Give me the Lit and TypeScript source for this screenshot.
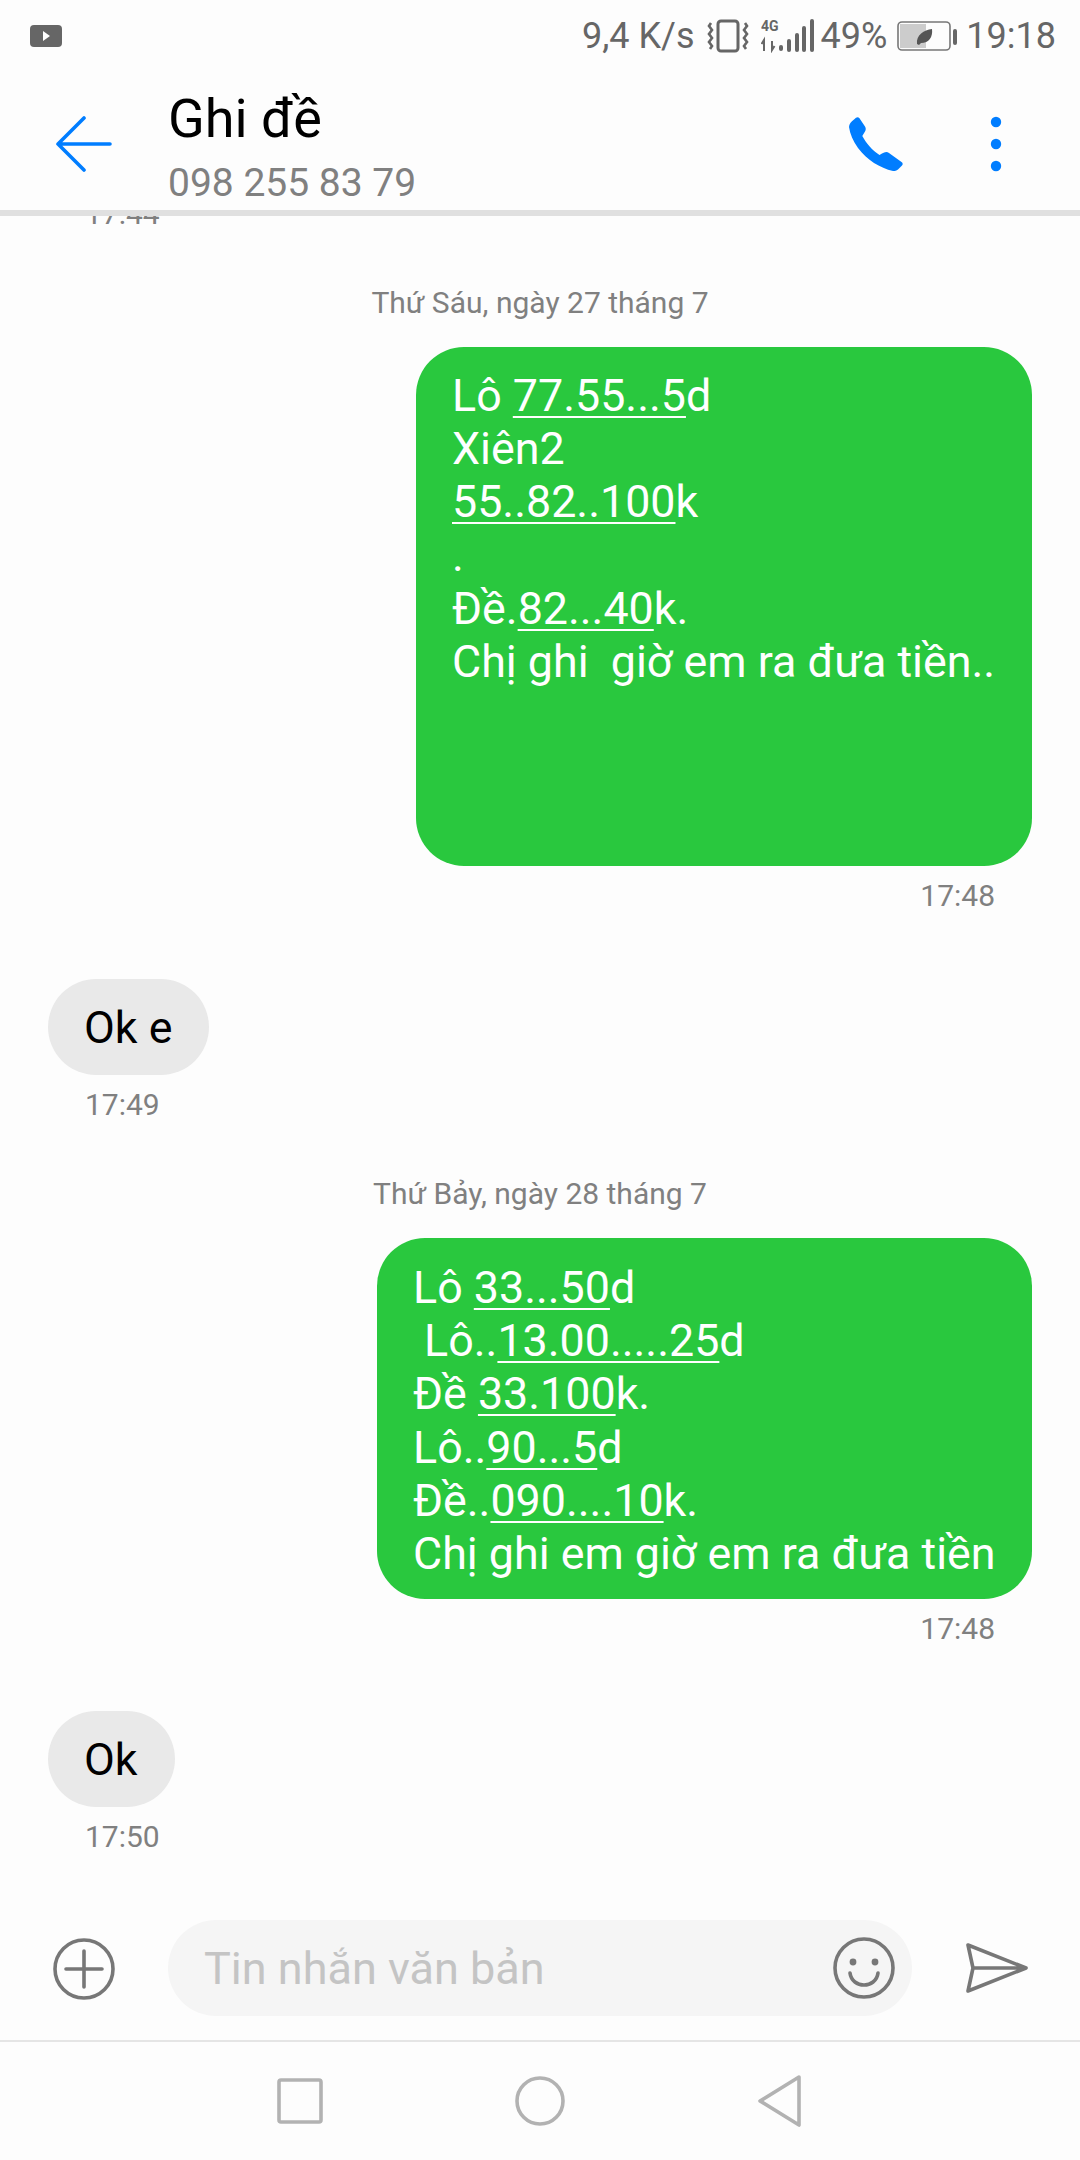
import { LitElement, html, css } from "lit";
import { customElement } from "lit/decorators.js";

@customElement("app-root")
export class AppRoot extends LitElement {
  static styles = css`
    :host { display: flex; flex-direction: column; width: 1080px; height: 2160px; background: #fdfdfd; font-family: Roboto, "Noto Sans", sans-serif; overflow: hidden; }
    .status { height: 72px; flex: none; display: flex; align-items: center; padding: 0 24px 0 30px; color: #666; font-size: 36px; box-sizing: border-box; }
    .status .yt { margin-right: auto; display: block; }
    .status .speed { margin-right: 12px; }
    .status svg { display: block; flex: none; }
    .status .sig { margin-left: 12px; }
    .status .pct { margin: 0 10px 0 7px; }
    .status .clock { margin-left: 8px; }
    .header { height: 138px; flex: none; display: flex; align-items: center; padding-left: 56px; box-sizing: border-box; }
    .back { margin-right: 56px; flex: none; margin-top: 6px; }
    .titles { flex: 1; align-self: flex-start; display: flex; flex-direction: column; margin-top: 16px; }
    .title { font-size: 54px; line-height: 62px; color: #000; }
    .sub { font-size: 39px; line-height: 46px; color: #808080; margin-top: 10px; }
    .call { margin-right: 87px; margin-top: 6px; flex: none; }
    .more { margin-right: 78px; margin-top: 6px; flex: none; }
    .rule { height: 6px; flex: none; background: #e0e0e0; }
    .list { flex: 1; min-height: 0; overflow: hidden; display: flex; flex-direction: column; }
    .list > * { flex: none; }
    .old { font-size: 30px; line-height: 36px; color: #808080; margin: -20px 0 0 85px; }
    .date { font-size: 30px; line-height: 36px; color: #808080; text-align: center; }
    .d1 { margin-top: 53px; }
    .d2 { margin-top: 53px; }
    .bubble { box-sizing: border-box; font-size: 44.8px; line-height: 53.2px; border-radius: 48px; white-space: pre; }
    .out { align-self: flex-end; margin-right: 48px; background: #29c83e; color: #fff; padding: 22px 36px 0 36px; }
    .b1 { width: 616px; height: 519px; margin-top: 26px; }
    .b2 { width: 655px; height: 361px; margin-top: 26px; padding-top: 23px; }
    .in { align-self: flex-start; margin-left: 48px; background: #e9e9e9; color: #000; height: 96px; line-height: 98px; padding: 0 37px 0 36px; }
    .t-r { align-self: flex-end; margin: 12px 85px 0 0; font-size: 30px; line-height: 36px; color: #808080; }
    .t-l { align-self: flex-start; margin: 12px 0 0 85px; font-size: 30px; line-height: 36px; color: #808080; }
    .i1 { margin-top: 65px; }
    .i2 { margin-top: 64px; }
    .composer { height: 132px; flex: none; display: flex; align-items: flex-start; box-sizing: border-box; padding-top: 12px; }
    .plus { margin: 18px 53px 0 53px; flex: none; }
    .pill { width: 744px; height: 96px; flex: none; background: #f5f5f5; border-radius: 48px; display: flex; align-items: center; justify-content: space-between; padding: 0 17px 0 36px; box-sizing: border-box; color: #c4c4c4; font-size: 45px; }
    .send { margin: 23px 0 0 54px; flex: none; }
    .nav { height: 120px; flex: none; border-top: 2px solid #e5e5e5; display: flex; align-items: center; box-sizing: border-box; }
    .nav svg { flex: none; display: block; }
    .n1 { margin-left: 277px; }
    .n2 { margin-left: 192px; }
    .n3 { margin-left: 193px; }
    u { text-underline-offset: 5px; text-decoration-thickness: 2px; }
  `;

  render() {
    return html`
      <div class="status">
        <svg class="yt" width="32" height="22" viewBox="0 0 32 22"><rect width="32" height="22" rx="4" fill="#666"/><path d="M13 6l7 5-7 5z" fill="#fff"/></svg>
        <span class="speed">9,4 K/s</span>
        <svg width="42" height="34" viewBox="0 0 42 34" fill="none" stroke="#666"><rect x="11" y="2" width="20" height="30" rx="3" stroke-width="3"/><path d="M4 4l-2 3 3 4-3 4 3 4-3 4 3 4-2 3M38 4l2 3-3 4 3 4-3 4 3 4-3 4 2 3" stroke-width="2.6"/></svg>
        <svg class="sig" width="53" height="34" viewBox="0 0 53 34"><text x="0" y="12" font-family="Roboto" font-weight="700" font-size="14" fill="#666">4G</text><path d="M3 32V21M0.5 25l2.500-4v4M11 22v9M13.500 27l-2.500 4v-4" stroke="#666" stroke-width="2" fill="none"/><rect x="18" y="26" width="4" height="6" rx="2" fill="#666"/><rect x="26" y="20" width="4" height="13" rx="2" fill="#666"/><rect x="34" y="14" width="4" height="19" rx="2" fill="#666"/><rect x="41" y="7" width="4" height="26" rx="2" fill="#666"/><rect x="49" y="0" width="4" height="33" rx="2" fill="#666"/></svg>
        <span class="pct">49%</span>
        <svg width="61" height="30" viewBox="0 0 61 30"><rect x="1" y="1" width="52" height="28" rx="4" fill="none" stroke="#777" stroke-width="1.6"/><rect x="3" y="3" width="26" height="24" fill="#ccc"/><path d="M20 23c-1-9 7-14 15-15 1 8-3 14-11 14l-2 2z" fill="#555"/><rect x="56" y="8" width="4" height="16" rx="2" fill="#666"/></svg>
        <span class="clock">19:18</span>
      </div>
      <div class="header">
        <svg class="back" width="56" height="56" viewBox="0 0 56 56" fill="none" stroke="#007dff" stroke-width="3.6" stroke-linecap="round" stroke-linejoin="round"><path d="M54 28H2M28 2L2 28l26 26"/></svg>
        <div class="titles"><div class="title">Ghi đề</div><div class="sub">098 255 83 79</div></div>
        <svg class="call" width="54" height="54" viewBox="0 0 54 54"><path d="M5 2.500L7 .7C8 0 9.500 0 10.300 1L16 9.500C17 11 17 13 16 14.500L13.300 19C17 26 23 33 30.500 38L33 36.500C35.500 35 38 34.500 40 36L52.500 45C54 46 54 47.500 53 48.500L49 52.500C47.500 54 46 54 44 54C31 51 18 43 9 31C4 24 1 17 0 10C0 7 2 5 5 2.500Z" fill="#007dff"/></svg>
        <svg class="more" width="12" height="56" viewBox="0 0 12 56" fill="#007dff"><circle cx="6" cy="6" r="5.200"/><circle cx="6" cy="28" r="5.200"/><circle cx="6" cy="50" r="5.200"/></svg>
      </div>
      <div class="rule"></div>
      <div class="list">
        <div class="old">17:44</div>
        <div class="date d1">Thứ Sáu, ngày 27 tháng 7</div>
        <div class="bubble out b1">Lô <u>77.55...5</u>d
Xiên2
<u>55..82..100</u>k
.
Đề.<u>82...40</u>k.
Chị ghi  giờ em ra đưa tiền..</div>
        <div class="t-r">17:48</div>
        <div class="bubble in i1">Ok e</div>
        <div class="t-l">17:49</div>
        <div class="date d2">Thứ Bảy, ngày 28 tháng 7</div>
        <div class="bubble out b2">Lô <u>33...50</u>d
 Lô..<u>13.00.....25</u>d
Đề <u>33.100</u>k.
Lô..<u>90...5</u>d
Đề..<u>090....10</u>k.
Chị ghi em giờ em ra đưa tiền</div>
        <div class="t-r">17:48</div>
        <div class="bubble in i2">Ok</div>
        <div class="t-l">17:50</div>
      </div>
      <div class="composer">
        <svg class="plus" width="62" height="62" viewBox="0 0 62 62" fill="none" stroke="#777" stroke-width="3.6"><circle cx="31" cy="31" r="29"/><path d="M31 13v36M13 31h36" stroke-linecap="round"/></svg>
        <div class="pill"><span>Tin nhắn văn bản</span>
          <svg width="62" height="62" viewBox="0 0 62 62" fill="none" stroke="#777" stroke-width="3.6"><circle cx="31" cy="31" r="29"/><circle cx="20" cy="25" r="3.400" fill="#777" stroke="none"/><circle cx="42" cy="25" r="3.400" fill="#777" stroke="none"/><path d="M17 36c2 16 26 16 28 0" stroke-linecap="round"/></svg>
        </div>
        <svg class="send" width="62" height="50" viewBox="0 0 62 50" fill="none" stroke="#777" stroke-width="3.6" stroke-linejoin="round"><path d="M2 2l58 23L2 48l5-23zM7 25h53"/></svg>
      </div>
      <div class="nav">
        <svg class="n1" width="46" height="46" viewBox="0 0 46 46" fill="none" stroke="#b2b2b2" stroke-width="3.6"><rect x="2" y="2" width="42" height="42" rx="2"/></svg>
        <svg class="n2" width="50" height="50" viewBox="0 0 50 50" fill="none" stroke="#b2b2b2" stroke-width="3.6"><circle cx="25" cy="25" r="23"/></svg>
        <svg class="n3" width="44" height="52" viewBox="0 0 44 52" fill="none" stroke="#b2b2b2" stroke-width="3.6" stroke-linejoin="round"><path d="M41 2L2 26l39 24z"/></svg>
      </div>
    `;
  }
}
